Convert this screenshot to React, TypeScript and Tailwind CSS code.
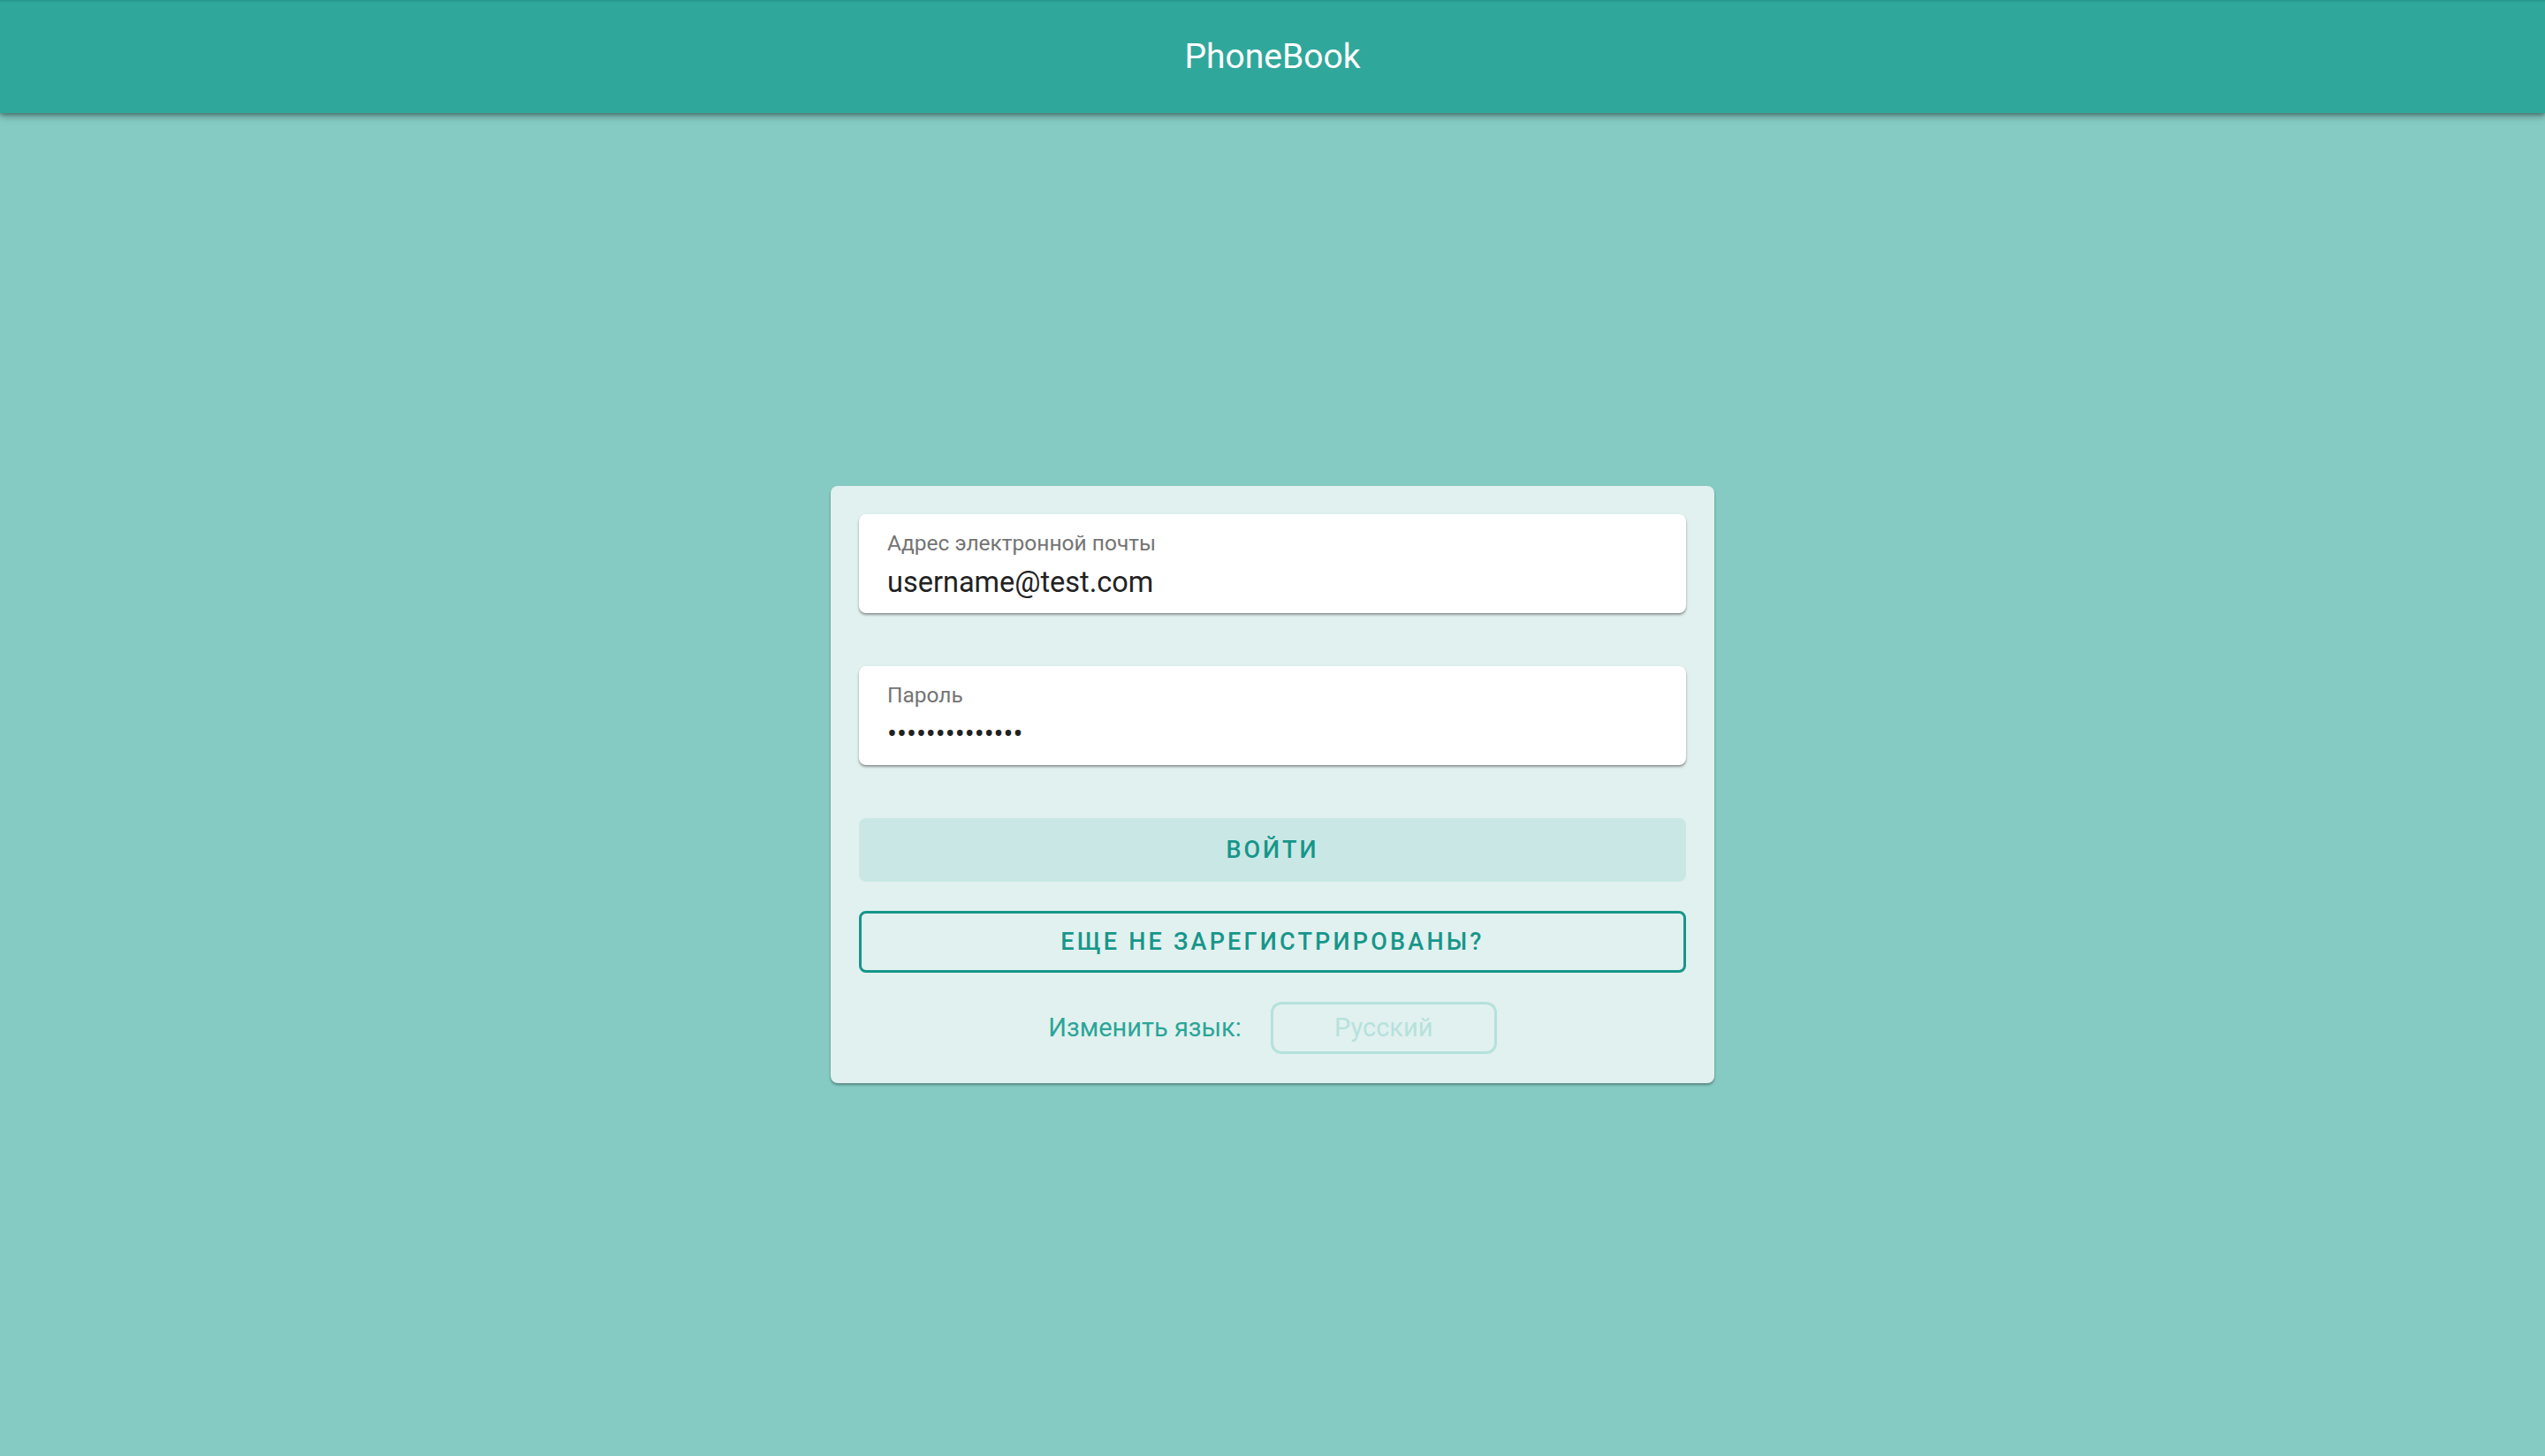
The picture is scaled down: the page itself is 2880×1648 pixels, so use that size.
import React from "react";

function Field({ label, value }: { label: string; value: string }) {
  return (
    <div className="h-[112px] rounded-[8px] bg-white px-[32px] pt-[19px] shadow-[0_2px_3px_rgba(0,0,0,0.35),0_1px_1px_rgba(0,0,0,0.12)]">
      <div className="text-[24.5px] leading-[28px] text-[#747474]">{label}</div>
      <div className="mt-[11px] text-[32.5px] leading-[38px] text-[#222]">{value}</div>
    </div>
  );
}

export default function App() {
  return (
    <div className="flex h-screen flex-col bg-[#85cbc4] font-['Roboto',sans-serif]">
      <header className="relative z-10 flex h-[128px] items-center justify-center border-t-2 border-[#279a8d] bg-[#30a79b] shadow-[0_4px_8px_rgba(0,0,0,0.3),0_2px_3px_rgba(0,0,0,0.2)]">
        <h1 className="-mt-[2px] text-[39px] font-normal text-white">PhoneBook</h1>
      </header>
      <main className="flex flex-1 items-center justify-center">
        <div className="flex w-[1000px] flex-col rounded-[8px] bg-[#e1f1ef] px-[32px] pt-[32px] pb-[33px] shadow-[0_2px_3px_rgba(0,0,0,0.35)]">
          <Field label="Адрес электронной почты" value="username@test.com" />
          <div className="mt-[60px]">
            <Field label="Пароль" value="••••••••••••••" />
          </div>
          <button className="mt-[60px] h-[72px] rounded-[8px] bg-[#c9e8e5] text-[27px] font-medium tracking-[3px] text-[#17968a]">
            ВОЙТИ
          </button>
          <button className="mt-[33px] h-[70px] rounded-[8px] border-[3px] border-[#17968a] text-[27px] font-medium tracking-[3.2px] text-[#17968a]">
            ЕЩЕ НЕ ЗАРЕГИСТРИРОВАНЫ?
          </button>
          <div className="mt-[33px] flex items-center justify-center gap-[33px]">
            <span className="text-[29px] text-[#2ba598]">Изменить язык:</span>
            <div className="flex h-[59px] w-[256px] items-center justify-center rounded-[12px] border-[3px] border-[#b6e1dd] text-[29px] text-[#b6e1dd]">
              Русский
            </div>
          </div>
        </div>
      </main>
    </div>
  );
}
